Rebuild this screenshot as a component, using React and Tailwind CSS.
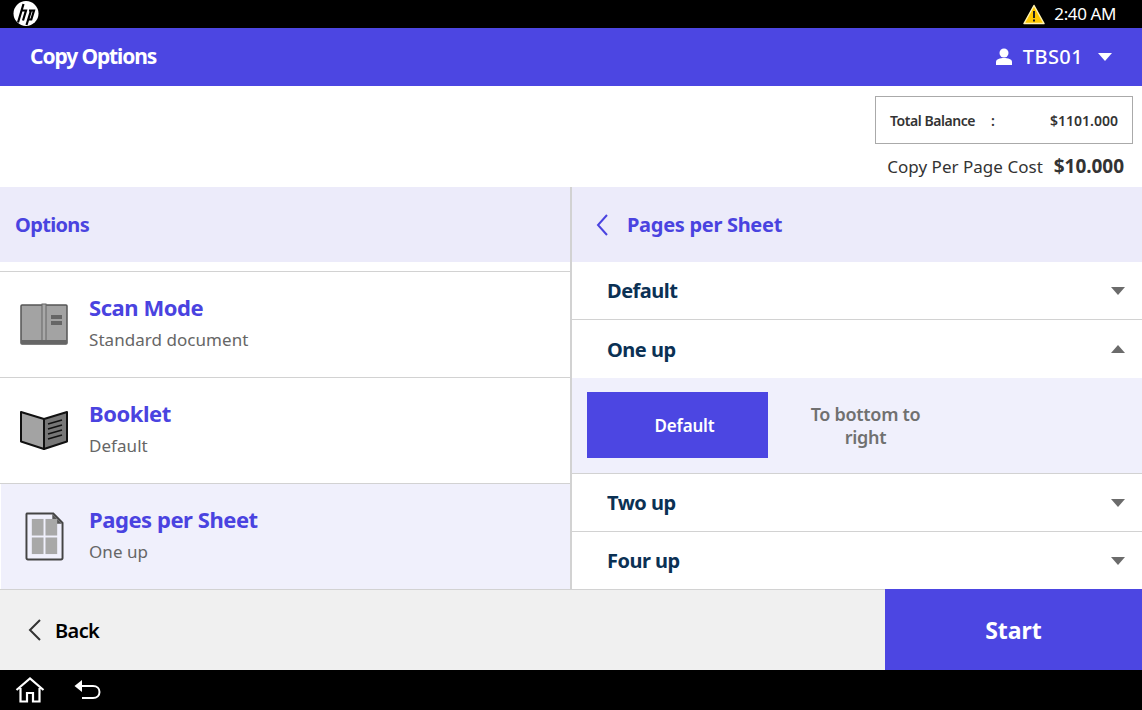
const F = { fontFamily: '"Noto Sans", sans-serif' };

function HpLogo() {
  return (
    <svg width="26" height="26" viewBox="0 0 26 26" aria-hidden="true">
      <circle cx="13" cy="12.5" r="12.5" fill="#fff" />
      <path d="M10.5 3 L5 21.5 M9 9.5 H13 L10 19.5 M18 9.5 L13.5 24 M16 9.5 H21 L18.3 18.5 H14.5" fill="none" stroke="#000" strokeWidth="2.2" />
    </svg>
  );
}

function Caret({ up, color = "#6b6b6b" }) {
  return (
    <svg width="14" height="8" viewBox="0 0 14 8" aria-hidden="true">
      <path d={up ? "M7 0 L14 8 H0 Z" : "M0 0 H14 L7 8 Z"} fill={color} />
    </svg>
  );
}

function ScanIcon() {
  return (
    <svg width="50" height="44" viewBox="0 0 50 44" aria-hidden="true">
      <rect x="2" y="2" width="46" height="39" rx="1" fill="#a3a3a3" stroke="#555" strokeWidth="1.5" />
      <rect x="23" y="1" width="4" height="37" fill="#a8a8a8" stroke="#666" strokeWidth="1" />
      <rect x="2" y="37" width="46" height="4" fill="#666" />
      <rect x="32" y="12" width="11" height="4" fill="#666" />
      <rect x="32" y="18" width="11" height="4" fill="#666" />
    </svg>
  );
}

function BookIcon() {
  return (
    <svg width="50" height="42" viewBox="0 0 50 42" aria-hidden="true">
      <path d="M2 2 L25 9 V39 L2 31.5 Z" fill="#a3a3a3" stroke="#111" strokeWidth="2" strokeLinejoin="round" />
      <path d="M25 9 L48 2 V31.5 L25 39 Z" fill="#777" stroke="#111" strokeWidth="2" strokeLinejoin="round" />
      <path d="M29 14 L43 10 M29 19 L43 15 M29 24 L43 20 M29 29 L43 25" stroke="#111" strokeWidth="1.6" />
    </svg>
  );
}

function SheetIcon() {
  return (
    <svg width="39" height="49" viewBox="0 0 40 50" aria-hidden="true">
      <path d="M2 1.5 H29 L38.5 11 V47 A1.5 1.5 0 0 1 37 48.5 H3 A1.5 1.5 0 0 1 1.5 47 V2 Z" fill="#f0f0fc" stroke="#444" strokeWidth="2" />
      <path d="M28 2 V12 H38 Z" fill="#555" />
      <rect x="7" y="7" width="12" height="17" fill="#a8a8a8" />
      <rect x="21" y="7" width="12" height="17" fill="#a8a8a8" />
      <rect x="7" y="26" width="12" height="17" fill="#a8a8a8" />
      <rect x="21" y="26" width="12" height="17" fill="#a8a8a8" />
    </svg>
  );
}

function OptionRow({ icon, title, sub, active, heightClass }) {
  return (
    <div className={`${heightClass} shrink-0 flex items-center border-b border-[#d2d2d2] last:border-b-0 ${active ? "bg-[#f0f0fc] border-l border-l-white" : "bg-white"}`}>
      <div className={`${active ? "w-[88px]" : "w-[89px]"} shrink-0 flex justify-center pr-[1px]`}>{icon}</div>
      <div className="flex flex-col gap-[6px] -mt-[7px]">
        <div className="text-[22px] leading-[30px] font-bold text-[#4a43e0] tracking-[-0.45px]">{title}</div>
        <div className="text-[17px] leading-[23px] text-[#666] tracking-[0.05px]">{sub}</div>
      </div>
    </div>
  );
}

function Accordion({ label, up, border = true, heightClass = "h-[58px]" }) {
  return (
    <div className={`${heightClass} shrink-0 flex items-center justify-between pl-[35px] pr-[17px] bg-white ${border ? "border-b border-[#d2d2d2]" : ""}`}>
      <span className="text-[20px] font-bold text-[#0b3154] tracking-[-0.5px] pt-[1px]">{label}</span>
      <Caret up={up} />
    </div>
  );
}

export default function App() {
  return (
    <div className="w-[1142px] h-[710px] flex flex-col overflow-hidden bg-white" style={F}>
      <div className="h-[28px] bg-black flex items-center justify-between pl-[13px] pr-[26px] shrink-0">
        <HpLogo />
        <div className="flex items-center gap-[9px] text-white text-[17px]">
          <svg width="22" height="21" viewBox="0 0 22 21" aria-hidden="true">
            <path d="M11 1.5 L21 19.5 H1 Z" fill="#ffc800" stroke="#fff3b0" strokeWidth="1.5" strokeLinejoin="round" />
            <rect x="10" y="7" width="2" height="7" fill="#222" />
            <rect x="10" y="15.5" width="2" height="2" fill="#222" />
          </svg>
          <span className="tracking-[-0.4px]">2:40 AM</span>
        </div>
      </div>

      <div className="h-[58px] bg-[#4c46e2] flex items-center justify-between pl-[30px] pr-[30px] shrink-0 text-white">
        <span className="text-[21px] font-bold tracking-[-1.1px]">Copy Options</span>
        <div className="flex items-center">
          <svg width="18" height="18" viewBox="0 0 18 18" aria-hidden="true">
            <circle cx="9" cy="5" r="4.5" fill="#fff" />
            <path d="M1 17 V14 C1 11 5 10 9 10 C13 10 17 11 17 14 V17 Z" fill="#fff" />
          </svg>
          <span className="ml-[10px] text-[20px] font-medium tracking-[0.4px]">TBS01</span>
          <span className="ml-[15px] flex"><Caret color="#fff" /></span>
        </div>
      </div>

      <div className="h-[101px] shrink-0 flex flex-col items-end pr-[9px] pt-[10px]">
        <div className="w-[258px] h-[48px] border border-[#aaa] flex items-center justify-between pl-[14px] pr-[14px] text-[#333] text-[14px] font-semibold pt-[1px]">
          <span className="flex"><span className="w-[101px] tracking-[-0.45px]">Total Balance</span><span>:</span></span>
          <span>$1101.000</span>
        </div>
        <div className="mt-[8px] flex items-center pr-[9px] text-[#333]">
          <span className="text-[17px] tracking-[0.02px]">Copy Per Page Cost</span>
          <span className="ml-[11px] text-[19px] font-bold -tracking-[0.05px]">$10.000</span>
        </div>
      </div>

      <div className="h-[402px] shrink-0 flex">
        <div className="w-[570px] shrink-0 flex flex-col">
          <div className="h-[75px] shrink-0 bg-[#ecebfa] flex items-center pl-[15px] text-[20px] font-bold text-[#4a43e0] tracking-[-0.65px] pt-[1px]">Options</div>
          <div className="h-[10px] shrink-0 border-b border-[#d2d2d2]" />
          <OptionRow heightClass="h-[106px]" icon={<ScanIcon />} title="Scan Mode" sub="Standard document" />
          <OptionRow heightClass="h-[106px]" icon={<BookIcon />} title="Booklet" sub="Default" />
          <OptionRow heightClass="h-[105px]" icon={<SheetIcon />} title="Pages per Sheet" sub="One up" active />
        </div>
        <div className="w-[2px] bg-[#d2d2d2] shrink-0" />
        <div className="flex-1 flex flex-col">
          <div className="h-[75px] shrink-0 bg-[#ecebfa] flex items-center pl-[24px] text-[#4a43e0]">
            <svg width="12" height="22" viewBox="0 0 12 22" aria-hidden="true">
              <path d="M11 1 L2 11 L11 21" fill="none" stroke="#4a43e0" strokeWidth="2" />
            </svg>
            <span className="ml-[19px] text-[20px] font-bold tracking-[-0.3px] pt-[1px]">Pages per Sheet</span>
          </div>
          <Accordion label="Default" />
          <Accordion label="One up" up border={false} />
          <div className="h-[96px] shrink-0 bg-[#f0f0fc] border-b border-[#d2d2d2] flex items-start pl-[15px] pt-[14px]">
            <div className="w-[181px] h-[66px] bg-[#4c46e2] text-white text-[17px] font-semibold flex items-center justify-center pl-[14px] pt-[1px] tracking-[-0.2px]">Default</div>
            <div className="w-[195px] h-[66px] flex items-center justify-center text-center text-[#707070] text-[18px] leading-[23px] font-semibold mt-[1px] tracking-[-0.3px]">To bottom to<br />right</div>
          </div>
          <Accordion label="Two up" />
          <Accordion label="Four up" border={false} heightClass="h-[57px]" />
        </div>
      </div>

      <div className="h-[81px] shrink-0 flex border-t border-[#d2d2d2] bg-[#f0f0f0]">
        <div className="flex-1 flex items-center pl-[28px]">
          <svg width="13" height="22" viewBox="0 0 13 22" aria-hidden="true">
            <path d="M12 1 L2 11 L12 21" fill="none" stroke="#333" strokeWidth="2" />
          </svg>
          <span className="ml-[14px] text-[20px] font-semibold text-black tracking-[-0.6px] pt-[1px]">Back</span>
        </div>
        <div className="w-[257px] -mt-[1px] bg-[#4c46e2] flex items-center justify-center text-white text-[23px] font-bold pt-[1px]">Start</div>
      </div>

      <div className="h-[40px] bg-black shrink-0 flex items-center pl-[15px] pb-[1px]">
        <svg width="30" height="26" viewBox="0 0 30 26" aria-hidden="true">
          <path d="M1.5 13 L15 1.5 L28.5 13 M5.5 11 V24.5 H12 V16 H18 V24.5 H24.5 V11" fill="none" stroke="#fff" strokeWidth="2.2" />
        </svg>
        <svg className="ml-[29px]" width="27" height="22" viewBox="0 0 27 22" aria-hidden="true">
          <path d="M0.5 7 L8 1 V13 Z" fill="#fff" />
          <path d="M7 7 H19 C23 7 25.5 9.5 25.5 13 C25.5 16.5 23 19 19 19 H8" fill="none" stroke="#fff" strokeWidth="2" />
        </svg>
      </div>
    </div>
  );
}
